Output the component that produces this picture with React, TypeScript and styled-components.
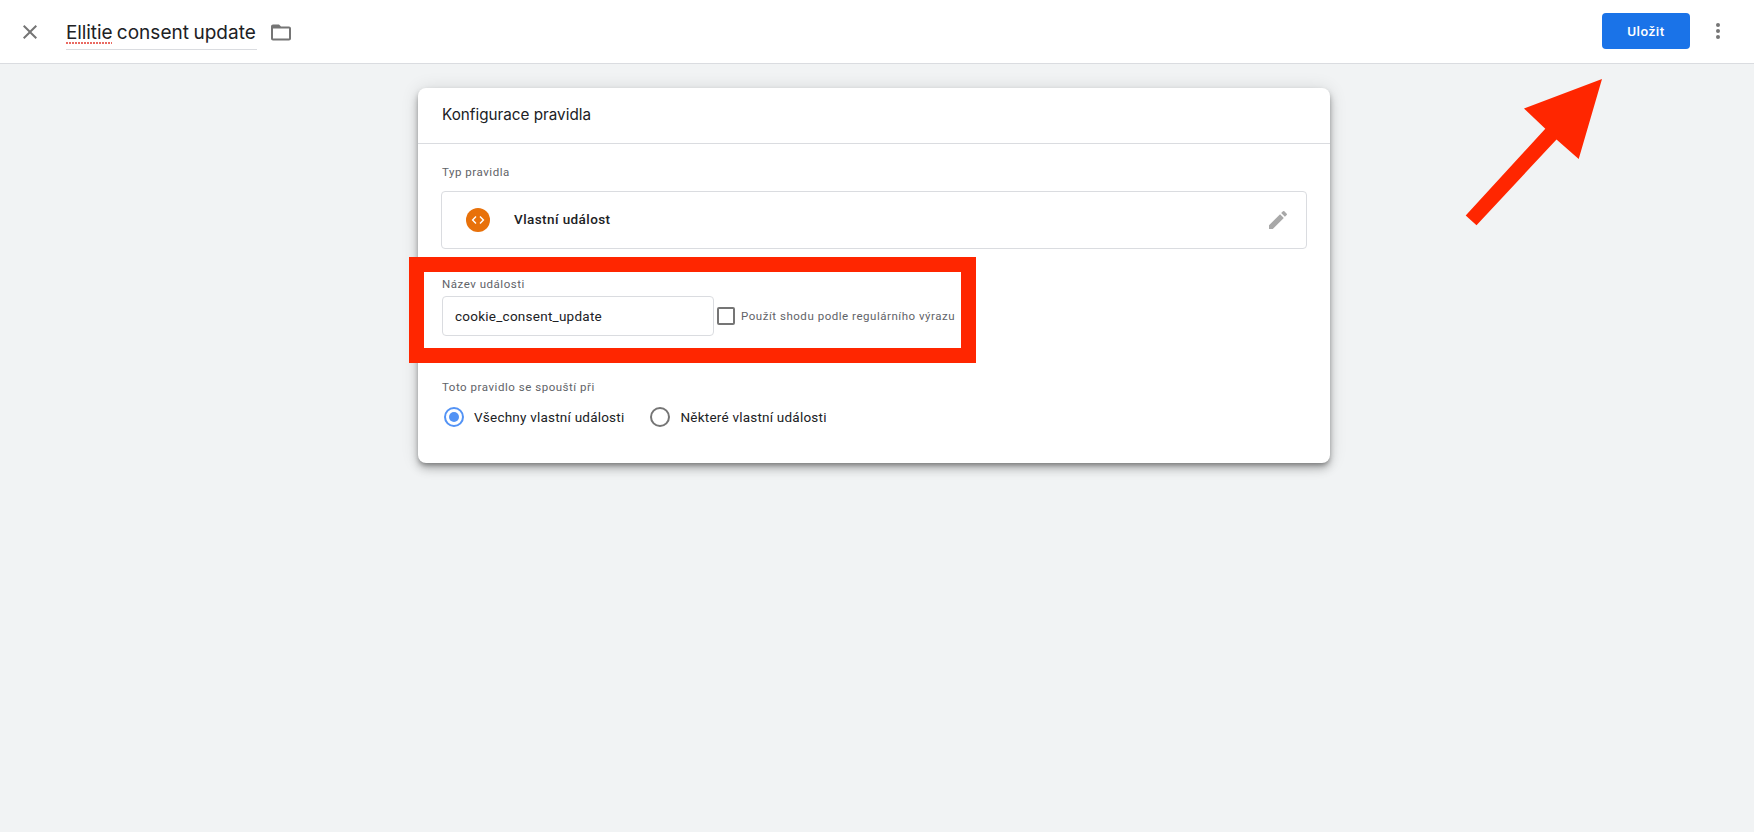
import React from 'react';
import styled, { createGlobalStyle } from 'styled-components';

const GlobalStyle = createGlobalStyle`
  * { box-sizing: border-box; }
  body {
    margin: 0;
    background: #f1f3f4;
    color: #202124;
    font: 400 13.5px/20px Roboto, sans-serif;
    letter-spacing: 0.22px;
  }
`;

const Page = styled.div`
  position: relative;
  display: flex;
  flex-direction: column;
  min-height: 832px;
  overflow: hidden;
`;

const Toolbar = styled.header`
  display: flex;
  align-items: center;
  height: 64px;
  padding: 0 24px 0 18px;
  background: #fff;
  border-bottom: 1px solid #dadce0;
`;

const IconButton = styled.button`
  display: flex;
  flex: none;
  padding: 0;
  border: 0;
  background: none;
  color: #757575;
`;

const TriggerName = styled.div`
  margin: 1px 12px 0 24px;
  height: 35px;
  width: 191px;
  padding-top: 5px;
  border-bottom: 1px solid #dadce0;
  font: 400 19px/26px Inter, sans-serif;
  letter-spacing: 0.03px;
  word-spacing: -1px;
  white-space: nowrap;
`;

const Misspelled = styled.span`
  letter-spacing: -0.1px;
  background: repeating-linear-gradient(90deg, #ea6a62 0 2px, transparent 2px 3px) 0 100% / 100% 2px no-repeat;
`;

const Actions = styled.div`
  display: flex;
  align-items: center;
  gap: 16px;
  margin-left: auto;
  margin-top: -2px;
`;

const SaveButton = styled.button`
  width: 88px;
  height: 36px;
  margin-top: 1px;
  padding: 0;
  border: 0;
  border-radius: 4px;
  background: #1a73e8;
  color: #fff;
  font: 500 13.5px/20px Roboto, sans-serif;
  letter-spacing: 0.5px;
`;

const Card = styled.section`
  position: relative;
  width: 912px;
  margin: 24px 0 0 418px;
  background: #fff;
  border-radius: 8px;
  box-shadow: 0 3px 5px -1px rgba(0, 0, 0, 0.34), 0 6px 10px 0 rgba(0, 0, 0, 0.2), 0 1px 18px 0 rgba(0, 0, 0, 0.12);
`;

const CardTitle = styled.h1`
  height: 56px;
  margin: 0;
  padding: 16px 24px 0;
  border-bottom: 1px solid #dadce0;
  font: 400 15.25px/22px Inter, sans-serif;
  letter-spacing: 0;
`;

const CardBody = styled.div`
  display: flex;
  flex-direction: column;
  padding: 20px 23px 34px;
`;

const Caption = styled.div<{ $top?: number }>`
  margin-top: ${(p) => p.$top ?? 0}px;
  padding-left: 1px;
  color: #5f6368;
  font-size: 11.5px;
  line-height: 16px;
  letter-spacing: 0.53px;
  white-space: nowrap;
`;

const TypeRow = styled.div`
  display: flex;
  align-items: center;
  height: 58px;
  margin-top: 11px;
  padding: 0 16px 0 24px;
  border: 1px solid #dadce0;
  border-radius: 4px;
`;

const TypeBadge = styled.span`
  display: flex;
  width: 24px;
  height: 24px;
  margin-right: 24px;
  border-radius: 50%;
  background: #e8710a;
`;

const TypeName = styled.span`
  flex: 1;
  margin-top: -2px;
  font-weight: 500;
  letter-spacing: 0.42px;
`;

const EventRow = styled.div`
  display: flex;
  align-items: center;
  height: 40px;
  margin: 4px 0 0 1px;
`;

const EventField = styled.div`
  width: 272px;
  height: 40px;
  padding: 9px 12px;
  border: 1px solid #dadce0;
  border-radius: 4px;
  letter-spacing: 0.25px;
`;

const Checkbox = styled.span`
  width: 18px;
  height: 18px;
  margin: 0 5px 0 3px;
  border: 2px solid #757575;
  border-radius: 2px;
`;

const RadioGroup = styled.div`
  display: flex;
  gap: 24px;
  margin: 10px 0 0 1px;
`;

const RadioOption = styled.label`
  display: flex;
  align-items: center;
  gap: 10px;
  height: 24px;
  padding-left: 2px;
`;

const RadioDot = styled.span<{ $on?: boolean }>`
  display: grid;
  place-items: center;
  width: 20px;
  height: 20px;
  border: 2px solid ${(p) => (p.$on ? '#5393f5' : '#757575')};
  border-radius: 50%;

  &::after {
    content: '';
    width: 10px;
    height: 10px;
    border-radius: 50%;
    background: ${(p) => (p.$on ? '#5393f5' : 'transparent')};
  }
`;

const HighlightFrame = styled.div`
  position: absolute;
  left: -9px;
  top: 169px;
  width: 567px;
  height: 106px;
  border: 15px solid #ff2600;
  pointer-events: none;
`;

const PointerArrow = styled.svg`
  position: absolute;
  left: 1460px;
  top: 70px;
  pointer-events: none;
`;

export default function App() {
  return (
    <Page>
      <GlobalStyle />
      <Toolbar>
        <IconButton aria-label="Zavřít">
          <svg width="24" height="24" viewBox="0 0 24 24" fill="currentColor">
            <path d="M19 6.41 17.59 5 12 10.59 6.41 5 5 6.41 10.59 12 5 17.59 6.41 19 12 13.41 17.59 19 19 17.59 13.41 12z" />
          </svg>
        </IconButton>
        <TriggerName>
          <Misspelled>Ellitie</Misspelled> consent update
        </TriggerName>
        <IconButton aria-label="Složka">
          <svg width="24" height="26" viewBox="0 -1.5 24 26" fill="currentColor">
            <path d="M20 6h-8l-2-2H4c-1.1 0-1.99.9-1.99 2L2 18c0 1.1.9 2 2 2h16c1.1 0 2-.9 2-2V8c0-1.1-.9-2-2-2zm0 12H4V8h16v10z" />
          </svg>
        </IconButton>
        <Actions>
          <SaveButton>Uložit</SaveButton>
          <IconButton aria-label="Další">
            <svg width="24" height="24" viewBox="0 0 24 24" fill="currentColor">
              <circle cx="12" cy="6" r="2" />
              <circle cx="12" cy="12" r="2" />
              <circle cx="12" cy="18" r="2" />
            </svg>
          </IconButton>
        </Actions>
      </Toolbar>

      <Card>
        <CardTitle>Konfigurace pravidla</CardTitle>
        <CardBody>
          <Caption>Typ pravidla</Caption>
          <TypeRow>
            <TypeBadge>
              <svg width="24" height="24" viewBox="0 0 24 24" fill="none" stroke="#fff" strokeWidth="1.4">
                <path d="M10 8.6 6.6 12l3.4 3.4M14 8.6l3.4 3.4-3.4 3.4" />
              </svg>
            </TypeBadge>
            <TypeName>Vlastní událost</TypeName>
            <svg width="24" height="24" viewBox="0 0 24 24" fill="#a8a8a8">
              <path d="M3 17.25V21h3.75L17.81 9.94l-3.75-3.75L3 17.25zM20.71 7.04a1 1 0 0 0 0-1.41l-2.34-2.34a1 1 0 0 0-1.41 0l-1.83 1.83 3.75 3.75 1.83-1.83z" />
            </svg>
          </TypeRow>

          <Caption $top={27}>Název události</Caption>
          <EventRow>
            <EventField>cookie_consent_update</EventField>
            <Checkbox />
            <Caption>Použít shodu podle regulárního výrazu</Caption>
          </EventRow>

          <Caption $top={43}>Toto pravidlo se spouští při</Caption>
          <RadioGroup>
            <RadioOption>
              <RadioDot $on />
              Všechny vlastní události
            </RadioOption>
            <RadioOption>
              <RadioDot />
              Některé vlastní události
            </RadioOption>
          </RadioGroup>
        </CardBody>
        <HighlightFrame />
      </Card>

      <PointerArrow width="150" height="160" viewBox="0 0 150 160">
        <polygon fill="#ff2600" points="142,9 64,38.5 85.3,58.7 5.7,145.5 16.5,155.3 96.5,69.5 118.7,89" />
      </PointerArrow>
    </Page>
  );
}
